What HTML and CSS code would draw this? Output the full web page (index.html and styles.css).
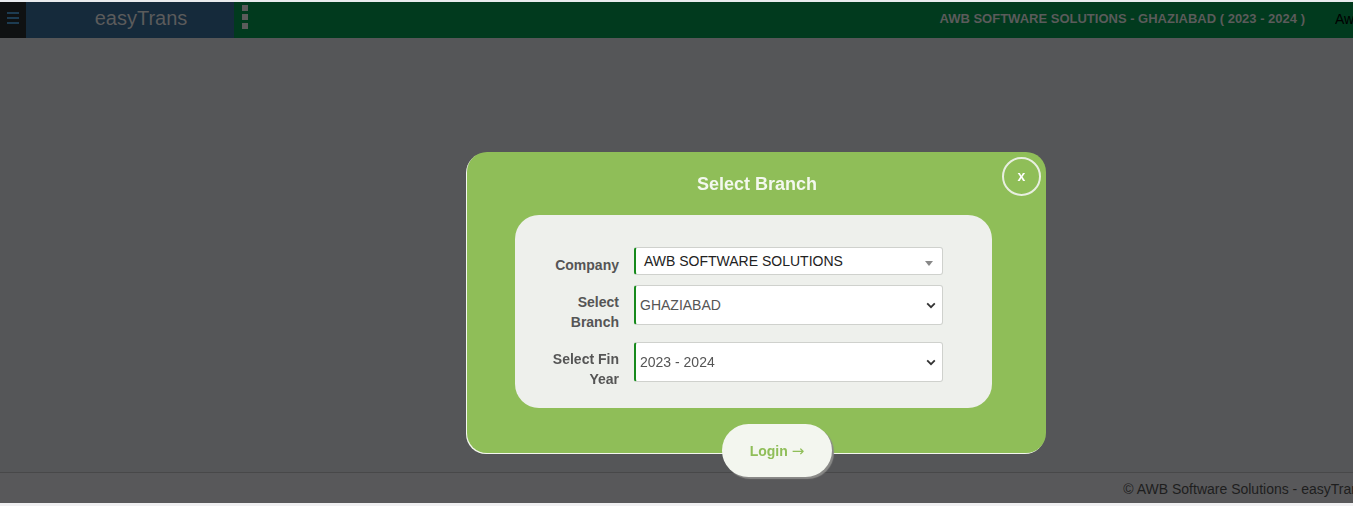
FILE: index.html
```html
<!DOCTYPE html>
<html lang="en">
<head>
<meta charset="utf-8">
<title>easyTrans - Select Branch</title>
<link rel="stylesheet" href="styles.css">
</head>
<body>
<div class="page">
  <header class="topbar">
    <div class="menu-btn">
      <span></span><span></span><span></span>
    </div>
    <div class="brand">easyTrans</div>
    <div class="main-bar">
      <div class="dots"><span></span><span></span><span></span></div>
      <div class="company-title">AWB SOFTWARE SOLUTIONS - GHAZIABAD ( 2023 - 2024 )</div>
      <div class="user">Aw</div>
    </div>
  </header>
  <main class="content"></main>
  <footer class="footer"><span class="copy">© AWB Software Solutions - easyTrans</span></footer>
  <div class="bottom-strip"></div>
</div>

<div class="overlay">
  <div class="modal">
    <div class="modal-head">
      <h2 class="modal-title">Select Branch</h2>
      <button class="close-btn">x</button>
    </div>
    <div class="panel">
      <div class="row">
        <label class="lbl">Company</label>
        <div class="field field-s2">
          <span class="val dark">AWB SOFTWARE SOLUTIONS</span>
          <span class="caret"></span>
        </div>
      </div>
      <div class="row">
        <label class="lbl">Select<br>Branch</label>
        <div class="field field-tall">
          <span class="val">GHAZIABAD</span>
          <svg class="chev" width="10" height="7" viewBox="0 0 10 7"><path d="M1.2 1.4 L5 5.2 L8.8 1.4" fill="none" stroke="#333" stroke-width="1.8"/></svg>
        </div>
      </div>
      <div class="row">
        <label class="lbl">Select Fin<br>Year</label>
        <div class="field field-tall">
          <span class="val">2023 - 2024</span>
          <svg class="chev" width="10" height="7" viewBox="0 0 10 7"><path d="M1.2 1.4 L5 5.2 L8.8 1.4" fill="none" stroke="#333" stroke-width="1.8"/></svg>
        </div>
      </div>
    </div>
    <div class="login-wrap">
      <button class="login-btn">Login <span class="arrow">→</span></button>
    </div>
  </div>
</div>
</body>
</html>
```

FILE: styles.css
```css
* { box-sizing: border-box; }
html, body { margin: 0; padding: 0; height: 100%; }
body {
  font-family: "Liberation Sans", Arial, sans-serif;
  background: #555658;
  overflow: hidden;
}
.page {
  display: flex;
  flex-direction: column;
  height: 506px;
  border-top: 2px solid #e9ebee;
}
.topbar {
  display: flex;
  height: 36px;
  flex: none;
}
.menu-btn {
  width: 26px;
  background: #0f1112;
  display: flex;
  flex-direction: column;
  align-items: center;
  justify-content: center;
  gap: 3px;
  padding-bottom: 4px;
}
.menu-btn span {
  width: 12px;
  height: 2px;
  background: #1d3c52;
}
.brand {
  width: 208px;
  background: #152a3b;
  color: #5b5b5b;
  font-size: 20px;
  display: flex;
  align-items: center;
  justify-content: center;
  padding-bottom: 3px;
  padding-left: 22px;
}
.main-bar {
  flex: 1;
  background: #013a1e;
  display: flex;
  align-items: center;
  padding-left: 8px;
}
.dots {
  display: flex;
  flex-direction: column;
  gap: 3px;
  padding-bottom: 6px;
}
.dots span {
  width: 6px;
  height: 6px;
  background: #5b5b5b;
}
.company-title {
  margin-left: auto;
  color: #5b5b5b;
  font-weight: bold;
  font-size: 13px;
  padding-bottom: 3px;
}
.user {
  margin-left: 30px;
  width: 18px;
  overflow: hidden;
  white-space: nowrap;
  color: #000;
  font-size: 14px;
  padding-bottom: 3px;
}
.content { flex: 1; }
.footer {
  height: 31px;
  flex: none;
  background: #58585a;
  border-top: 1px solid #484849;
  display: flex;
  justify-content: flex-end;
  align-items: center;
  overflow: hidden;
}
.copy {
  white-space: nowrap;
  color: #1e1e1e;
  font-size: 14px;
  margin-right: -13px;
  padding-top: 2px;
}
.bottom-strip {
  height: 3px;
  flex: none;
  background: #f0f0f2;
}

/* Modal overlay */
.overlay {
  position: fixed;
  inset: 0;
  display: flex;
  align-items: flex-start;
  padding: 152px 0 0 467px;
}
.modal {
  position: relative;
  width: 579px;
  height: 301px;
  background: #8fbe58;
  border-radius: 20px;
  box-shadow: -1px 1px 0 #f4f7ef;
  display: flex;
  flex-direction: column;
  align-items: flex-start;
}
.modal-head {
  flex: none;
  width: 100%;
  height: 63px;
  display: flex;
  justify-content: center;
  align-items: center;
  position: relative;
}
.modal-title {
  margin: 0;
  color: #f3f8ee;
  font-size: 18px;
  font-weight: bold;
  padding-top: 1px;
  padding-left: 1px;
}
.close-btn {
  position: absolute;
  right: 5px;
  top: 5px;
  width: 39px;
  height: 39px;
  border-radius: 50%;
  border: 2px solid #e8efe0;
  background: transparent;
  color: #ffffff;
  font-family: "Liberation Sans", Arial, sans-serif;
  font-size: 14px;
  font-weight: bold;
  padding: 0 0 2px 0;
}
.panel {
  flex: none;
  margin-left: 48px;
  width: 477px;
  height: 193px;
  background: #eef0ec;
  border-radius: 24px;
  display: flex;
  flex-direction: column;
  padding: 32px 0 0 0;
  gap: 10px;
}
.row {
  display: flex;
  align-items: flex-start;
}
.lbl {
  width: 104px;
  text-align: right;
  color: #555;
  font-size: 14px;
  font-weight: bold;
  line-height: 20px;
  padding-top: 7px;
}
.row:first-child .lbl { padding-top: 8px; }
.field {
  margin-left: 15px;
  width: 309px;
  background: #fff;
  border: 1px solid #cfd1cd;
  border-left: 2px solid #178a1c;
  border-radius: 3px;
  display: flex;
  align-items: center;
  font-size: 14px;
}
.field-s2 {
  height: 28px;
  padding-left: 8px;
}
.field-tall {
  height: 40px;
  padding-left: 4px;
}
.val {
  flex: 1;
  color: #555;
}
.val.dark { color: #222; }
.caret {
  width: 0;
  height: 0;
  border-left: 4px solid transparent;
  border-right: 4px solid transparent;
  border-top: 5px solid #888;
  margin-right: 9px;
  margin-top: 4px;
}
.chev { margin-right: 6px; }
.login-wrap {
  flex: none;
  align-self: stretch;
  display: flex;
  justify-content: center;
  padding-top: 16px;
}
.login-btn {
  flex: none;
  width: 110px;
  height: 53px;
  border-radius: 27px;
  border: none;
  background: #f3f6ef;
  color: #8fbe58;
  font-family: "Liberation Sans", Arial, sans-serif;
  font-size: 14px;
  font-weight: bold;
  box-shadow: 2px 2px 1px #8a8a88;
  margin-left: 41px;
  padding: 0;
}
.arrow {
  font-family: "DejaVu Sans", sans-serif;
  font-weight: normal;
  font-size: 15px;
}
```
